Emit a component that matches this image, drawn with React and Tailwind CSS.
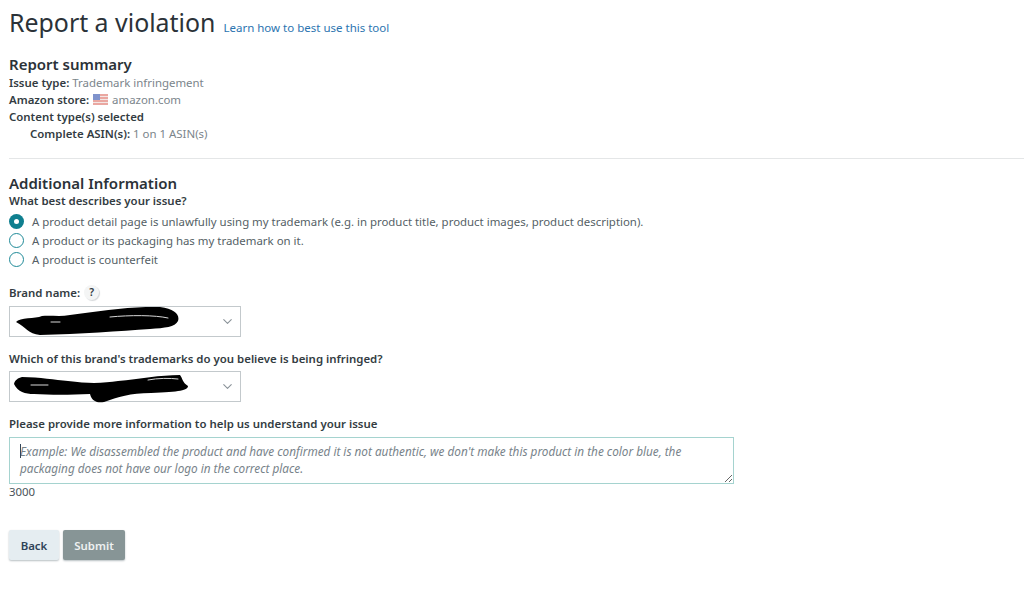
import React from 'react';
import { ChevronDown } from 'lucide-react';

function Flag() {
  return (
    <svg width="15" height="11" viewBox="0 0 15 11" className="shrink-0">
      <rect width="15" height="11" fill="#f3e6e4" />
      <path d="M0 1h15M0 4h15M0 7h15M0 10h15" stroke="#e2685f" strokeWidth="1.2" />
      <rect width="7" height="6" fill="#7f93cc" />
    </svg>
  );
}

function Radio({ checked, children }) {
  return (
    <div className="flex items-center h-[19px]">
      {checked ? (
        <span className="w-[15px] h-[15px] rounded-full bg-[#0f7f8f] flex items-center justify-center shrink-0">
          <span className="w-[5px] h-[5px] rounded-full bg-white" />
        </span>
      ) : (
        <span className="w-[15px] h-[15px] rounded-full border border-[#1f8a98] bg-white shrink-0" />
      )}
      <span className="ml-[8px] text-[#555f66]">{children}</span>
    </div>
  );
}

// redaction marks drawn over the select values
function Scribble({ d, gaps }) {
  return (
    <svg width="190" height="34" viewBox="0 0 190 34" className="absolute left-0 top-0">
      <path d={d} fill="#000" />
      <path d={gaps} fill="none" stroke="#d8d8d8" strokeWidth="1" strokeLinecap="round" />
    </svg>
  );
}

function BrandSelect({ d, gaps }) {
  return (
    <div className="relative w-[232px] h-[31px] border border-[#c3c9cc] bg-white flex items-center justify-end pr-[5px]">
      <Scribble d={d} gaps={gaps} />
      <ChevronDown size={15} strokeWidth={1.7} className="text-[#8a9298]" />
    </div>
  );
}

export default function App() {
  return (
    <div className="min-h-[589px] bg-white text-[11.43px] leading-[17px] text-[#333c42] font-['Noto_Sans',sans-serif] overflow-hidden">
      <div className="pl-[9px] pt-[5px] flex items-baseline h-[46px]">
        <h1 className="text-[24.9px] leading-[34px] text-[#2b3238]">Report a violation</h1>
        <a className="ml-[8px] text-[11.5px] text-[#2b74b0]">Learn how to best use this tool</a>
      </div>

      <div className="pl-[9px] pt-[4px]">
        <h2 className="text-[15px] leading-[20px] font-semibold text-[#2b3238] mt-[4px]">Report summary</h2>
        <p className="h-[17px]"><b className="font-semibold">Issue type:</b> <span className="text-[#7b858b]">Trademark infringement</span></p>
        <p className="h-[17px] flex items-center gap-[4px]">
          <b className="font-semibold">Amazon store:</b>
          <Flag />
          <span className="text-[#7b858b]">amazon.com</span>
        </p>
        <p className="h-[17px] font-semibold">Content type(s) selected</p>
        <p className="h-[17px] pl-[21px]"><b className="font-semibold">Complete ASIN(s):</b> <span className="text-[#7b858b]">1 on 1 ASIN(s)</span></p>
      </div>

      <div className="ml-[9px] mt-[16px] h-px bg-[#e4e6e7]" />

      <div className="pl-[9px] pt-[15px]">
        <h2 className="text-[15px] leading-[18px] font-semibold text-[#2b3238]">Additional Information</h2>
        <p className="h-[17px] font-semibold">What best describes your issue?</p>
        <div className="mt-[3px]">
          <Radio checked>A product detail page is unlawfully using my trademark (e.g. in product title, product images, product description).</Radio>
          <Radio>A product or its packaging has my trademark on it.</Radio>
          <Radio>A product is counterfeit</Radio>
        </div>

        <div className="mt-[13px] h-[20px] flex items-center font-semibold">
          Brand name:
          <span className="ml-[4px] w-[15px] h-[15px] rounded-full bg-[#f4f5f5] shadow-[1px_1px_1px_#d5d8da] text-[10.5px] flex items-center justify-center">?</span>
        </div>
        <div className="mt-[4px]">
          <BrandSelect
            d="M6 15 C10 10 25 12 32 9 C40 8 50 10 60 8 C90 4 125 -1 150 0 C165 2 170 8 168 14 C165 20 155 21 140 22 C110 24 70 27 30 28 C18 27 16 20 6 15 Z"
            gaps="M41 15 H50 M100 10 C120 8 145 8 158 11"
          />
        </div>

        <p className="mt-[13px] h-[17px] font-semibold">Which of this brand's trademarks do you believe is being infringed?</p>
        <div className="mt-[4px]">
          <BrandSelect
            d="M4 12 C5 8 8 6 12 5 C30 5 45 8 58 9 C80 12 95 11 108 9 C130 7 150 3 170 3 C173 7 172 10 178 14 C178 18 170 20 141 21 C120 21 108 25 94 30 C88 31 82 30 80 22 C60 23 40 23 24 22 C15 22 8 20 4 12 Z"
            gaps="M21 13 H38 M138 8 C148 6 160 6 168 7"
          />
        </div>

        <p className="mt-[13px] h-[17px] font-semibold">Please provide more information to help us understand your issue</p>
        <div className="relative mt-[5px] w-[725px]">
          <textarea
            readOnly
            placeholder="Example: We disassembled the product and have confirmed it is not authentic, we don't make this product in the color blue, the packaging does not have our logo in the correct place."
            className="block w-full h-[47px] border border-[#a5d3cf] bg-white px-[10px] py-[5px] italic text-[11.75px] leading-[17px] outline-none placeholder:text-[#78838a]"
          />
          <span className="absolute left-[11px] top-[7px] w-px h-[14px] bg-[#33475b]" />
        </div>
        <p className="-mt-px h-[17px] text-[#4a5359]">3000</p>

        <div className="mt-[30px] flex gap-[4px]">
          <button className="w-[50px] h-[30px] bg-[#e5edf1] rounded-[2px] shadow-[0_1px_2px_#b8bfc3] font-semibold text-[#2f4358]">Back</button>
          <button className="w-[62px] h-[30px] bg-[#879596] rounded-[2px] shadow-[0_1px_2px_#b8bfc3] font-semibold text-[#eef1f1]">Submit</button>
        </div>
      </div>
    </div>
  );
}
